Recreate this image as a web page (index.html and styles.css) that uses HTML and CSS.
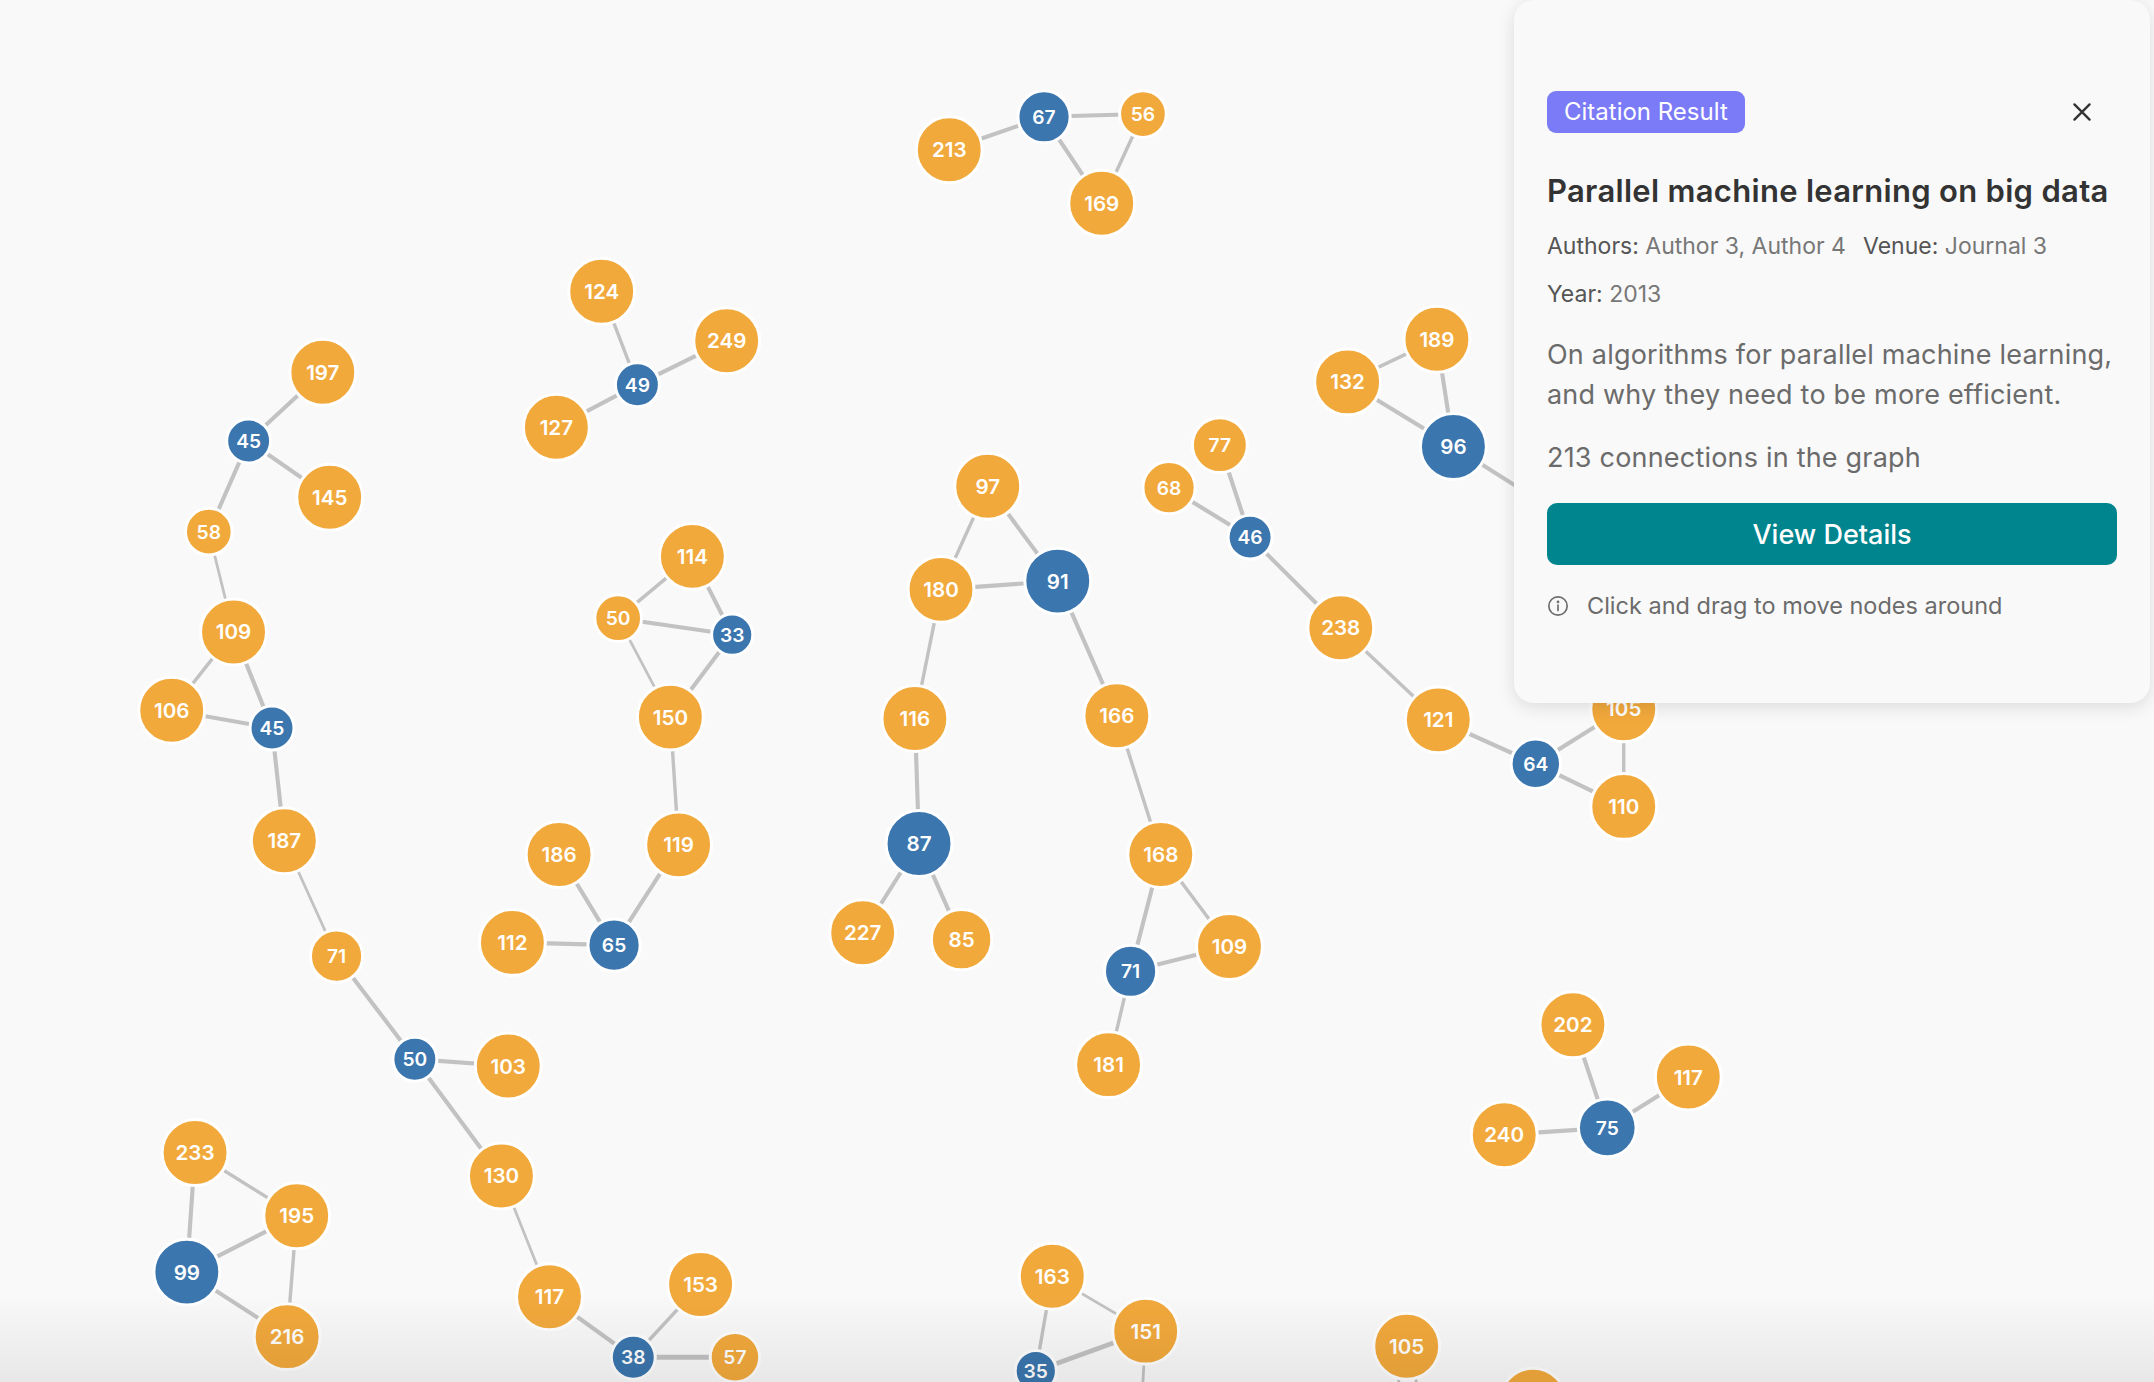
FILE: index.html
```html
<!DOCTYPE html>
<html lang="en">
<head>
    <meta charset="UTF-8">
    <meta name="viewport" content="width=device-width, initial-scale=1.0">
    <title>Citation Graph</title>
    <link rel="stylesheet" href="styles.css">
</head>
<body>
    <!-- Graph canvas -->
    <svg class="graph" id="graph" viewBox="0 0 1568 1006" xmlns="http://www.w3.org/2000/svg">
        <g id="edges"></g>
        <g id="nodes"></g>
    </svg>

    <div class="bottom-shade"></div>

    <!-- Selected node panel -->
    <div class="panel">
        <div class="panel-header">
            <span class="badge">Citation Result</span>
            <button class="close-btn" aria-label="Close">
                <svg width="26" height="26" viewBox="0 0 24 24" fill="none" stroke="#333" stroke-width="2.2" stroke-linecap="round">
                    <path d="M5 5 L19 19 M19 5 L5 19"/>
                </svg>
            </button>
        </div>

        <h2 class="paper-title">Parallel machine learning on big data</h2>

        <div class="meta">
            <span><b>Authors:</b> Author 3, Author 4</span>
            <span><b>Venue:</b> Journal 3</span>
        </div>
        <div class="meta year"><span><b>Year:</b> 2013</span></div>

        <p class="abstract">On algorithms for parallel machine learning, and why they need to be more efficient.</p>

        <p class="connections">213 connections in the graph</p>

        <button class="details-btn">View Details</button>

        <div class="hint">
            <svg width="22" height="22" viewBox="0 0 24 24" fill="none" stroke="#6b6b6b" stroke-width="1.8" stroke-linecap="round">
                <circle cx="12" cy="12" r="10"/>
                <path d="M12 11 V17"/>
                <circle cx="12" cy="7.5" r="0.6" fill="#6b6b6b"/>
            </svg>
            <span>Click and drag to move nodes around</span>
        </div>
    </div>

    <script>
        // node: [id, x, y, radius, type, label]
        const nodes = [
            ['a213', 691, 109, 24, 'paper', '213'],
            ['a67', 760, 85, 19, 'result', '67'],
            ['a56', 832, 83, 17, 'paper', '56'],
            ['a169', 802, 148, 24, 'paper', '169'],

            ['b124', 438, 212, 24, 'paper', '124'],
            ['b249', 529, 248, 24, 'paper', '249'],
            ['b49', 464, 280, 16, 'result', '49'],
            ['b127', 405, 311, 24, 'paper', '127'],

            ['c197', 235, 271, 24, 'paper', '197'],
            ['c45', 181, 321, 16, 'result', '45'],
            ['c145', 240, 362, 24, 'paper', '145'],
            ['c58', 152, 387, 17, 'paper', '58'],
            ['c109', 170, 460, 24, 'paper', '109'],
            ['c106', 125, 517, 24, 'paper', '106'],
            ['c45b', 198, 530, 16, 'result', '45'],
            ['c187', 207, 612, 24, 'paper', '187'],
            ['c71', 245, 696, 19, 'paper', '71'],
            ['c50', 302, 771, 16, 'result', '50'],
            ['c103', 370, 776, 24, 'paper', '103'],
            ['c130', 365, 856, 24, 'paper', '130'],
            ['c117', 400, 944, 24, 'paper', '117'],
            ['c38', 461, 988, 16, 'result', '38'],
            ['c153', 510, 935, 24, 'paper', '153'],
            ['c57', 535, 988, 18, 'paper', '57'],

            ['d233', 142, 839, 24, 'paper', '233'],
            ['d195', 216, 885, 24, 'paper', '195'],
            ['d99', 136, 926, 24, 'result', '99'],
            ['d216', 209, 973, 24, 'paper', '216'],

            ['e114', 504, 405, 24, 'paper', '114'],
            ['e50', 450, 450, 17, 'paper', '50'],
            ['e33', 533, 462, 15, 'result', '33'],
            ['e150', 488, 522, 24, 'paper', '150'],
            ['e119', 494, 615, 24, 'paper', '119'],
            ['e186', 407, 622, 24, 'paper', '186'],
            ['e112', 373, 686, 24, 'paper', '112'],
            ['e65', 447, 688, 19, 'result', '65'],

            ['f97', 719, 354, 24, 'paper', '97'],
            ['f180', 685, 429, 24, 'paper', '180'],
            ['f91', 770, 423, 24, 'result', '91'],
            ['f116', 666, 523, 24, 'paper', '116'],
            ['f166', 813, 521, 24, 'paper', '166'],
            ['f87', 669, 614, 24, 'result', '87'],
            ['f227', 628, 679, 24, 'paper', '227'],
            ['f85', 700, 684, 22, 'paper', '85'],
            ['f168', 845, 622, 24, 'paper', '168'],
            ['f109', 895, 689, 24, 'paper', '109'],
            ['f71', 823, 707, 19, 'result', '71'],
            ['f181', 807, 775, 24, 'paper', '181'],

            ['g77', 888, 324, 20, 'paper', '77'],
            ['g68', 851, 355, 19, 'paper', '68'],
            ['g46', 910, 391, 16, 'result', '46'],
            ['g238', 976, 457, 24, 'paper', '238'],
            ['g121', 1047, 524, 24, 'paper', '121'],
            ['g64', 1118, 556, 18, 'result', '64'],
            ['g105', 1182, 516, 24, 'paper', '105'],
            ['g110', 1182, 587, 24, 'paper', '110'],
            ['g132', 981, 278, 24, 'paper', '132'],
            ['g189', 1046, 247, 24, 'paper', '189'],
            ['g96', 1058, 325, 24, 'result', '96'],
            ['g200', 1126, 368, 23, 'paper', ''],

            ['h202', 1145, 746, 24, 'paper', '202'],
            ['h117', 1229, 784, 24, 'paper', '117'],
            ['h240', 1095, 826, 24, 'paper', '240'],
            ['h75', 1170, 821, 21, 'result', '75'],

            ['i163', 766, 929, 24, 'paper', '163'],
            ['i151', 834, 969, 24, 'paper', '151'],
            ['i35', 754, 998, 15, 'result', '35'],
            ['i105', 1024, 980, 24, 'paper', '105'],
            ['i88', 1116, 1020, 24, 'paper', ''],
            ['j1', 829, 1062, 20, 'paper', ''],
            ['j2', 1004, 1068, 20, 'paper', ''],
            ['j3', 1048, 1068, 20, 'paper', '']
        ];

        // edge: [from, to, width]
        const edges = [
            ['a213', 'a67', 3], ['a67', 'a56', 3], ['a67', 'a169', 3], ['a56', 'a169', 2.5],
            ['b124', 'b49', 2.5], ['b249', 'b49', 3], ['b127', 'b49', 3],
            ['c197', 'c45', 3], ['c45', 'c145', 3], ['c45', 'c58', 3], ['c58', 'c109', 2],
            ['c109', 'c106', 2.5], ['c109', 'c45b', 3], ['c106', 'c45b', 3], ['c45b', 'c187', 3],
            ['c187', 'c71', 2], ['c71', 'c50', 3], ['c50', 'c103', 3], ['c50', 'c130', 3],
            ['c130', 'c117', 2], ['c117', 'c38', 3], ['c38', 'c153', 2.5], ['c38', 'c57', 3.5],
            ['d233', 'd195', 2.5], ['d233', 'd99', 3], ['d99', 'd195', 3], ['d99', 'd216', 3], ['d195', 'd216', 2.5],
            ['e114', 'e50', 2.5], ['e114', 'e33', 3], ['e50', 'e33', 3], ['e50', 'e150', 2],
            ['e33', 'e150', 3], ['e150', 'e119', 2.5], ['e119', 'e65', 3], ['e186', 'e65', 3], ['e112', 'e65', 3],
            ['f97', 'f180', 2.5], ['f97', 'f91', 3], ['f180', 'f91', 3], ['f180', 'f116', 2.5],
            ['f91', 'f166', 3], ['f116', 'f87', 3], ['f87', 'f227', 3], ['f87', 'f85', 3],
            ['f166', 'f168', 2.5], ['f168', 'f109', 2.5], ['f168', 'f71', 3], ['f71', 'f109', 3], ['f71', 'f181', 2.5],
            ['g77', 'g46', 3], ['g68', 'g46', 3], ['g46', 'g238', 3], ['g238', 'g121', 2.5],
            ['g121', 'g64', 3], ['g64', 'g105', 3], ['g64', 'g110', 3], ['g105', 'g110', 2.5],
            ['g132', 'g189', 2.5], ['g132', 'g96', 3], ['g189', 'g96', 3], ['g96', 'g200', 3],
            ['h202', 'h75', 3], ['h117', 'h75', 3], ['h240', 'h75', 3],
            ['i163', 'i151', 2], ['i163', 'i35', 2.5], ['i35', 'i151', 3.5], ['i151', 'j1', 2],
            ['i105', 'j2', 2], ['i105', 'j3', 2]
        ];

        const SVG_NS = 'http://www.w3.org/2000/svg';
        const byId = {};
        nodes.forEach(n => byId[n[0]] = n);

        const edgeLayer = document.getElementById('edges');
        edges.forEach(([from, to, width]) => {
            const a = byId[from], b = byId[to];
            const line = document.createElementNS(SVG_NS, 'line');
            line.setAttribute('x1', a[1]);
            line.setAttribute('y1', a[2]);
            line.setAttribute('x2', b[1]);
            line.setAttribute('y2', b[2]);
            line.setAttribute('stroke-width', width);
            line.setAttribute('class', 'edge');
            edgeLayer.appendChild(line);
        });

        const nodeLayer = document.getElementById('nodes');
        nodes.forEach(([id, x, y, r, type, label]) => {
            const g = document.createElementNS(SVG_NS, 'g');
            g.setAttribute('class', 'node ' + type);

            const circle = document.createElementNS(SVG_NS, 'circle');
            circle.setAttribute('cx', x);
            circle.setAttribute('cy', y);
            circle.setAttribute('r', r);
            g.appendChild(circle);

            if (label) {
                const text = document.createElementNS(SVG_NS, 'text');
                text.setAttribute('x', x);
                text.setAttribute('y', y);
                text.setAttribute('class', r >= 22 ? 'label' : 'label small');
                text.textContent = label;
                g.appendChild(text);
            }

            nodeLayer.appendChild(g);
        });
    </script>
</body>
</html>
```

FILE: styles.css
```css
* { margin: 0; padding: 0; box-sizing: border-box; }

body {
    font-family: Inter, 'Noto Sans', sans-serif;
    background: #f9f9f9;
    width: 100vw;
    height: 100vh;
    overflow: hidden;
    color: #333;
}

.graph {
    display: block;
    width: 100vw;
    height: 100vh;
}

.edge {
    stroke: #c2c2c2;
    stroke-linecap: round;
}

.node circle {
    stroke: #fff;
    stroke-width: 2.2;
}

.node.paper circle { fill: #f2a93c; }
.node.result circle { fill: #3b76ae; }

.label {
    fill: #fff;
    font-family: Inter, sans-serif;
    font-weight: 600;
    font-size: 15px;
    text-anchor: middle;
    dominant-baseline: central;
}

.label.small {
    font-size: 14px;
}

.bottom-shade {
    position: absolute;
    left: 0;
    right: 0;
    bottom: 0;
    height: 90px;
    background: linear-gradient(rgba(0,0,0,0), rgba(0,0,0,0.07));
    pointer-events: none;
}

/* Selected paper panel */
.panel {
    position: absolute;
    top: 0;
    right: 4px;
    width: 636px;
    height: 703px;
    padding: 91px 33px 0;
    background: #f9f9f9;
    border-radius: 20px;
    box-shadow: 0 4px 18px rgba(0,0,0,0.12);
}

.panel-header {
    display: flex;
    align-items: center;
    justify-content: space-between;
}

.badge {
    display: inline-block;
    height: 42px;
    line-height: 42px;
    padding: 0 17px;
    background: #7b7bf8;
    color: #fff;
    font-size: 24px;
    border-radius: 9px;
}

.close-btn {
    background: none;
    border: none;
    margin-right: 22px;
    display: flex;
    cursor: pointer;
}

.paper-title {
    margin-top: 38px;
    font-size: 31px;
    line-height: 40px;
    font-weight: 600;
    letter-spacing: 0.3px;
    color: #333;
}

.meta {
    display: flex;
    gap: 17px;
    margin-top: 20px;
    font-size: 23px;
    line-height: 30px;
    color: #777;
}

.meta b {
    font-weight: 400;
    color: #555;
}

.meta.year {
    margin-top: 18px;
}

.abstract {
    margin-top: 26px;
    font-size: 27px;
    line-height: 40px;
    letter-spacing: 0.2px;
    color: #6b6b6b;
}

.connections {
    margin-top: 23px;
    font-size: 27px;
    line-height: 40px;
    letter-spacing: 0.2px;
    color: #6b6b6b;
}

.details-btn {
    display: block;
    width: 100%;
    height: 62px;
    margin-top: 25px;
    background: #00858f;
    color: #fff;
    border: none;
    border-radius: 10px;
    font-family: inherit;
    font-size: 27px;
    font-weight: 500;
    cursor: pointer;
}

.hint {
    display: flex;
    align-items: center;
    gap: 18px;
    margin-top: 26px;
    font-size: 23.5px;
    line-height: 30px;
    color: #6b6b6b;
}
```
